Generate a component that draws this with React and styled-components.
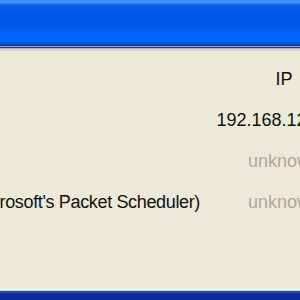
import React from "react";
import styled, { createGlobalStyle } from "styled-components";

const GlobalStyle = createGlobalStyle`
  html, body {
    margin: 0;
    padding: 0;
    background: #ece9d8;
  }
`;

const rows = [
  { name: "", ip: "IP" },
  { name: "", ip: "192.168.123.100" },
  { name: "", ip: "unknown", muted: true },
  {
    name: "Intel(R) PRO/100 VE Network Connection (Microsoft's Packet Scheduler)",
    ip: "unknown",
    muted: true,
  },
];

export default function App() {
  return (
    <>
      <GlobalStyle />
      <Window>
        <TitleBar />
        <TitleEdge />
        <Content>
          <Table>
            {rows.map((row, i) => (
              <Row key={i}>
                <NameCell>{row.name}</NameCell>
                <IpCell $muted={row.muted}>{row.ip}</IpCell>
              </Row>
            ))}
          </Table>
        </Content>
        <BottomEdge />
      </Window>
    </>
  );
}

const Window = styled.div`
  width: 300px;
  height: 300px;
  display: flex;
  flex-direction: column;
  overflow: hidden;
  background: #ece9d8;
  font-family: "Liberation Sans", Arial, sans-serif;
  font-size: 18px;
  color: #111;
`;

const TitleBar = styled.div`
  height: 45px;
  flex-shrink: 0;
  background: linear-gradient(
    to bottom,
    #3584f2 0px,
    #4a94fa 1px,
    #3d8bf6 3px,
    #0b5ee6 5px,
    #0056e4 12px,
    #005be9 28px,
    #0066fb 34px,
    #0067ff 41px,
    #0058e2 42px,
    #004fd2 45px
  );
`;

const TitleEdge = styled.div`
  height: 6px;
  flex-shrink: 0;
  background: linear-gradient(
    to bottom,
    #1c3470 0px,
    #1c3470 1px,
    #93a9d6 1px,
    #93a9d6 2px,
    #2f3a52 2px,
    #2f3a52 3px,
    #a9afbb 3px,
    #a9afbb 4px,
    #dcd8c6 4px,
    #dcd8c6 6px
  );
`;

const Content = styled.div`
  flex: 1;
  overflow: hidden;
  padding-top: 8px;
`;

const Table = styled.div`
  display: grid;
  grid-template-columns: 200px 136px;
  column-gap: 16px;
  width: 352px;
`;

const Row = styled.div`
  display: contents;
`;

const NameCell = styled.div`
  height: 41px;
  line-height: 41px;
  display: flex;
  justify-content: flex-end;
  white-space: nowrap;
  overflow: hidden;
  letter-spacing: -0.35px;
`;

const IpCell = styled.div`
  height: 41px;
  line-height: 41px;
  text-align: center;
  white-space: nowrap;
  color: ${(p) => (p.$muted ? "#aca899" : "#111")};
`;

const BottomEdge = styled.div`
  height: 11px;
  flex-shrink: 0;
  background: linear-gradient(
    to bottom,
    #f6f5ee 0px,
    #f6f5ee 1px,
    #bcd3f2 1px,
    #bcd3f2 2px,
    #2f4fb4 2px,
    #2142ac 4px,
    #0c2c9c 5px,
    #0a2896 11px
  );
`;
